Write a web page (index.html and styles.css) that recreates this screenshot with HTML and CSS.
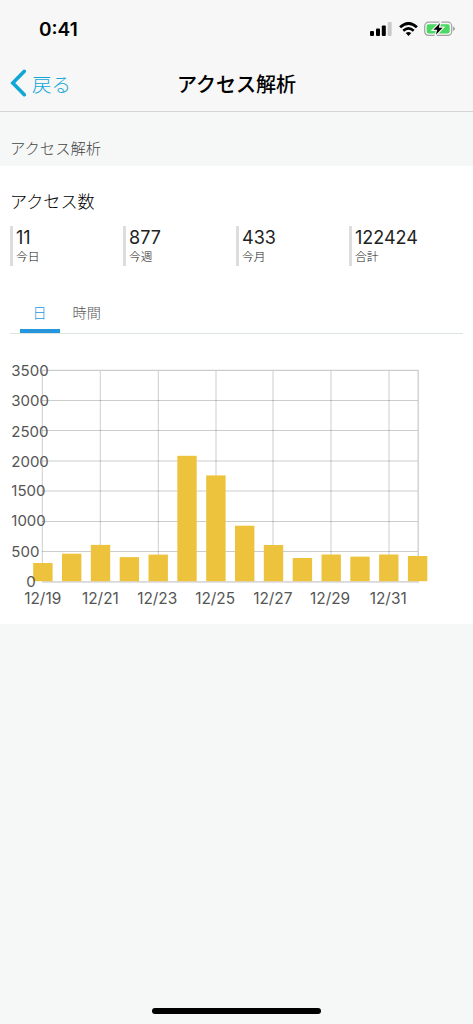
FILE: index.html
```html
<!DOCTYPE html>
<html lang="ja">
<head>
    <meta charset="UTF-8">
    <meta name="viewport" content="width=device-width, initial-scale=1.0">
    <title>アクセス解析</title>
    <link rel="stylesheet" href="styles.css">
</head>
<body>

<header>
    <div class="status-bar">
        <span class="time">0:41</span>
        <div class="status-icons">
            <svg class="signal" width="22" height="14" viewBox="0 0 22 14">
                <rect x="0" y="9" width="4" height="5" rx="1"/>
                <rect x="6" y="6.5" width="4" height="7.5" rx="1"/>
                <rect x="11.8" y="3.5" width="4" height="10.5" rx="1"/>
                <rect x="17.7" y="0" width="4" height="14" rx="1" fill="#c9caca"/>
            </svg>
            <svg class="wifi" width="19" height="14" viewBox="0 0 19 14">
                <path d="M1.1 5.3Q9.5-2.4 17.9 5.3" fill="none" stroke="#000" stroke-width="2.8"/>
                <path d="M4.3 8.8Q9.5 4 14.7 8.8" fill="none" stroke="#000" stroke-width="2.6"/>
                <path d="M6.7 11.1Q9.5 8.7 12.3 11.1L9.5 14Z"/>
            </svg>
            <svg class="battery" width="31" height="16" viewBox="0 0 31 16">
                <rect x=".7" y="1.2" width="27" height="13.2" rx="3.8" fill="none" stroke="#a2a2a3" stroke-width="1.2"/>
                <rect x="2.7" y="3.2" width="23" height="9.2" rx="1.8" fill="#4bd863"/>
                <path d="M29 5.6Q31 6.4 31 7.8T29 10Z" fill="#a2a2a3"/>
                <path d="M16 2L9.4 8.8H13.2L11.9 13.8L18.6 6.8H14.8Z" stroke="#f7f7f7" stroke-width="2.4" paint-order="stroke"/>
            </svg>
        </div>
    </div>
    <nav>
        <a href="#" class="back">
            <svg width="16" height="28" viewBox="0 0 16 28">
                <path d="M14.3 2.3L2.8 14L14.3 25.7" fill="none" stroke="#11a6d5" stroke-width="3.6" stroke-linecap="round"/>
            </svg>
            <span>戻る</span>
        </a>
        <h1>アクセス解析</h1>
    </nav>
</header>

<main>
    <h2 class="section-title">アクセス解析</h2>
    <section class="panel">
        <h3>アクセス数</h3>
        <ul class="stats">
            <li><strong>11</strong><span>今日</span></li>
            <li><strong>877</strong><span>今週</span></li>
            <li><strong>433</strong><span>今月</span></li>
            <li><strong>122424</strong><span>合計</span></li>
        </ul>
        <div class="tabs">
            <a href="#day" class="active">日</a>
            <a href="#hour">時間</a>
        </div>
        <svg class="chart" width="473" height="274" viewBox="0 350 473 274">
            <!-- Grid -->
            <path class="grid" d="M42 370.5H418M42 400.5H418M42 430.5H418M42 461H418M42 491H418M42 521.5H418M42 551.5H418"/>
            <path class="grid" d="M42.3 370V582M100.3 370V582M158.3 370V582M216 370V582M273 370V582M331 370V582M389 370V582"/>
            <path class="edge" d="M42 370.3H418.2V582"/>
            <path class="base" d="M42 581.8H419"/>
            <!-- Bars -->
            <g class="bars">
                <rect x="33.2" y="563" width="19.4" height="18.2"/>
                <rect x="62" y="553.7" width="19.4" height="27.5"/>
                <rect x="90.8" y="544.9" width="19.4" height="36.3"/>
                <rect x="119.7" y="557.1" width="19.4" height="24.1"/>
                <rect x="148.5" y="554.6" width="19.4" height="26.6"/>
                <rect x="177.3" y="455.8" width="19.4" height="125.4"/>
                <rect x="206.2" y="475.4" width="19.4" height="105.8"/>
                <rect x="235" y="525.7" width="19.4" height="55.5"/>
                <rect x="263.8" y="545" width="19.4" height="36.2"/>
                <rect x="292.7" y="558" width="19.4" height="23.2"/>
                <rect x="321.5" y="554.5" width="19.4" height="26.7"/>
                <rect x="350.3" y="556.6" width="19.4" height="24.6"/>
                <rect x="379.1" y="554.5" width="19.4" height="26.7"/>
                <rect x="407.9" y="556" width="19.4" height="25.2"/>
            </g>
            <!-- Labels -->
            <g class="labels">
                <text x="11.3" y="376">3500</text>
                <text x="11.3" y="406">3000</text>
                <text x="11.3" y="436.5">2500</text>
                <text x="11.3" y="466.7">2000</text>
                <text x="11.3" y="496">1500</text>
                <text x="11.3" y="526">1000</text>
                <text x="11.3" y="556.5">500</text>
                <text x="26.3" y="586.5">0</text>
            </g>
            <g class="labels dates">
                <text x="42.7" y="604">12/19</text>
                <text x="100.4" y="604">12/21</text>
                <text x="157.2" y="604">12/23</text>
                <text x="215.1" y="604">12/25</text>
                <text x="272.8" y="604">12/27</text>
                <text x="330.1" y="604">12/29</text>
                <text x="388.2" y="604">12/31</text>
            </g>
        </svg>
    </section>
</main>

<footer>
    <div class="home-indicator"></div>
</footer>

</body>
</html>
```
FILE: styles.css
```css
* {
    box-sizing: border-box;
}
body {
    font-family: Inter, "Noto Sans CJK JP", sans-serif;
    margin: 0;
    height: 1024px;
    display: flex;
    flex-direction: column;
    background: #f6f8f8;
    color: #222;
}
h1, h2, h3, ul {
    margin: 0;
    padding: 0;
    font-weight: 400;
}
a {
    text-decoration: none;
}
header {
    height: 112px;
    background: #f7f7f7;
    border-bottom: 1px solid #d5d7d7;
}
.status-bar {
    display: flex;
    justify-content: space-between;
    align-items: center;
    height: 56px;
    padding: 2px 18px 0 39px;
}
.time {
    font-size: 19px;
    font-weight: 600;
    color: #000;
}
.status-icons {
    display: flex;
    align-items: center;
    gap: 7px;
}
.battery {
    margin-left: -1px;
}
nav {
    display: grid;
    grid-template-columns: 1fr auto 1fr;
    align-items: center;
    height: 54px;
    padding-left: 10px;
    padding-right: 10px;
}
.back {
    display: flex;
    align-items: center;
    gap: 6px;
    color: #11a6d5;
    font-size: 19.5px;
    font-weight: 300;
}
nav h1 {
    font-size: 20px;
    font-weight: 500;
    color: #000;
}
.section-title {
    height: 54px;
    padding: 19px 10px 0;
    font-size: 15.3px;
    line-height: 36px;
    font-weight: 300;
    color: #444;
}
.panel {
    height: 458px;
    padding-top: 21px;
    background: #fff;
}
.panel h3 {
    padding-left: 10px;
    font-size: 17.1px;
    line-height: 30px;
    font-weight: 300;
    color: #000;
}
.stats {
    display: grid;
    grid-template-columns: repeat(4, 113px);
    margin: 9px 0 0 10px;
    list-style-type: none;
}
.stats li {
    display: flex;
    flex-direction: column;
    height: 40px;
    padding-left: 3px;
    border-left: 3px solid #ddd;
}
.stats strong {
    font-size: 18px;
    line-height: 23px;
    font-weight: 400;
}
.stats span {
    font-size: 11.8px;
    line-height: 17px;
    font-weight: 300;
    color: #111;
}
.tabs {
    display: flex;
    height: 43px;
    margin: 25px 10px 0;
    border-bottom: 1px solid #dbe3e3;
}
.tabs a {
    height: 42px;
    padding: 0 12.5px;
    font-size: 14.2px;
    line-height: 43px;
    font-weight: 300;
    color: #555;
}
.tabs .active {
    width: 40px;
    margin-left: 10px;
    color: #2596dc;
    border-bottom: 4px solid #2596dc;
}
.chart {
    display: block;
    margin-top: 16px;
}
.grid {
    stroke: #000;
    stroke-opacity: .2;
    fill: none;
}
.edge {
    stroke: #ccc;
    stroke-width: 1.3;
    fill: none;
}
.base {
    stroke: #d8d8d8;
    stroke-width: 1.8;
}
.bars {
    fill: #edc33e;
}
.labels {
    font-size: 15px;
    fill: #555;
}
.dates {
    font-size: 15.4px;
    text-anchor: middle;
}
footer {
    display: flex;
    justify-content: center;
    margin-top: auto;
    padding-bottom: 10px;
}
.home-indicator {
    width: 169px;
    height: 6px;
    border-radius: 3px;
    background: #000;
}
```
